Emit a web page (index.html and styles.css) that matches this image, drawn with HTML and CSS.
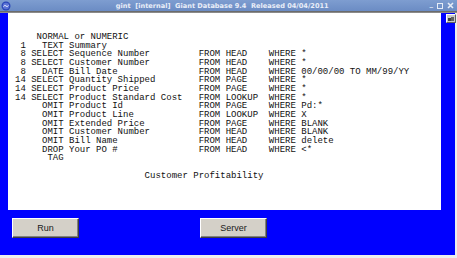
FILE: index.html
```html
<!DOCTYPE html>
<html>

<head>
    <title>gint</title>
    <link rel="stylesheet" href="styles.css">
</head>

<body>
    <div class="window">
        <div class="title-bar">
            <svg class="app-icon" width="10" height="10" viewBox="0 0 10 10">
                <circle cx="5" cy="5" r="4.5" fill="#2a46b8" />
                <circle cx="5" cy="5" r="3.2" fill="#5b74d6" />
                <path d="M2.5 5.5 Q4 3.5 5 5 T7.5 4.5" stroke="#e8ecff" stroke-width="1" fill="none" />
            </svg>
            <span class="title-text">gint  [internal]  Giant Database 9.4  Released 04/04/2011</span>
            <div class="controls">
                <span class="ctl">_</span>
                <svg class="ctl-box" width="6" height="6" viewBox="0 0 6 6">
                    <rect x="0.5" y="0.5" width="5" height="5" fill="none" stroke="#e6ecf6" stroke-width="1" />
                </svg>
                <svg class="ctl-x" width="7" height="7" viewBox="0 0 7 7">
                    <path d="M1 1 L6 6 M6 1 L1 6" stroke="#e6ecf6" stroke-width="1.6" />
                </svg>
            </div>
        </div>
        <div class="title-rule"></div>

        <div class="frame">
            <div class="frame-top">
                <pre class="report">    NORMAL or NUMERIC
 1   TEXT Summary
 8 SELECT Sequence Number         FROM HEAD    WHERE *
 8 SELECT Customer Number         FROM HEAD    WHERE *
 8   DATE Bill Date               FROM HEAD    WHERE 00/00/00 TO MM/99/YY
14 SELECT Quantity Shipped        FROM PAGE    WHERE *
14 SELECT Product Price           FROM PAGE    WHERE *
14 SELECT Product Standard Cost   FROM LOOKUP  WHERE *
     OMIT Product Id              FROM PAGE    WHERE Pd:*
     OMIT Product Line            FROM LOOKUP  WHERE X
     OMIT Extended Price          FROM PAGE    WHERE BLANK
     OMIT Customer Number         FROM HEAD    WHERE BLANK
     OMIT Bill Name               FROM HEAD    WHERE delete
     DROP Your PO #               FROM HEAD    WHERE &lt;*
      TAG

                        Customer Profitability</pre>
                <div class="side">
                    <div class="grip">
                        <svg width="8" height="7" viewBox="0 0 8 7">
                            <rect x="1" y="3" width="3" height="3" fill="#404040" />
                            <rect x="4" y="2" width="3" height="4" fill="#606060" />
                        </svg>
                    </div>
                </div>
            </div>

            <div class="button-row">
                <button class="btn">Run</button>
                <button class="btn">Server</button>
            </div>
        </div>
    </div>
</body>

</html>
```

FILE: styles.css
```css
body {
    margin: 0;
    background-color: #eeeeee;
    width: 457px;
    height: 258px;
    overflow: hidden;
}

.window {
    width: 457px;
    height: 255px;
    display: flex;
    flex-direction: column;
}

.title-bar {
    height: 11px;
    background: linear-gradient(#7e9dd0, #6b8cc4);
    display: flex;
    align-items: center;
    padding: 0 2px 0 1px;
}

.app-icon {
    display: block;
}

.title-text {
    flex: 1;
    text-align: center;
    white-space: pre;
    font-family: 'DejaVu Sans', sans-serif;
    font-weight: bold;
    font-size: 6.6px;
    color: #e9eef8;
    padding-left: 4px;
}

.controls {
    display: flex;
    align-items: center;
    gap: 4px;
    padding-right: 1px;
}

.ctl {
    font-family: 'DejaVu Sans', sans-serif;
    font-weight: bold;
    font-size: 7px;
    color: #e6ecf6;
    line-height: 7px;
    margin-top: -2px;
}

.ctl-box,
.ctl-x {
    display: block;
}

.title-rule {
    height: 2px;
    background: linear-gradient(#5c5c5c, #9a9a9a);
}

.frame {
    flex: 1;
    background-color: #0000ff;
    display: flex;
    flex-direction: column;
    padding-left: 8px;
    margin-right: 2px;
}

.frame-top {
    display: flex;
}

.report {
    flex: 1;
    margin: 0;
    background-color: #ffffff;
    padding: 20px 0 0 7px;
    font-family: 'Liberation Mono', 'DejaVu Sans Mono', monospace;
    font-size: 9px;
    line-height: 8.65px;
    color: #111111;
    box-sizing: border-box;
    height: 197px;
}

.side {
    width: 14px;
}

.grip {
    width: 8px;
    height: 7px;
    margin: 1px 0 0 5px;
    background-color: #c8c8c8;
    border: 1px solid #ffffff;
    border-right-color: #606060;
    border-bottom-color: #606060;
}

.grip svg {
    display: block;
}

.button-row {
    display: flex;
    gap: 121px;
    padding: 8px 0 0 4px;
}

.btn {
    width: 67px;
    height: 20px;
    background-color: #d4d0c8;
    border: 1px solid;
    border-color: #ffffff #404040 #404040 #ffffff;
    box-shadow: inset -1px -1px 0 #808080;
    font-family: 'Liberation Sans', Arial, sans-serif;
    font-size: 9px;
    color: #1a1a1a;
    padding: 0;
}
```
